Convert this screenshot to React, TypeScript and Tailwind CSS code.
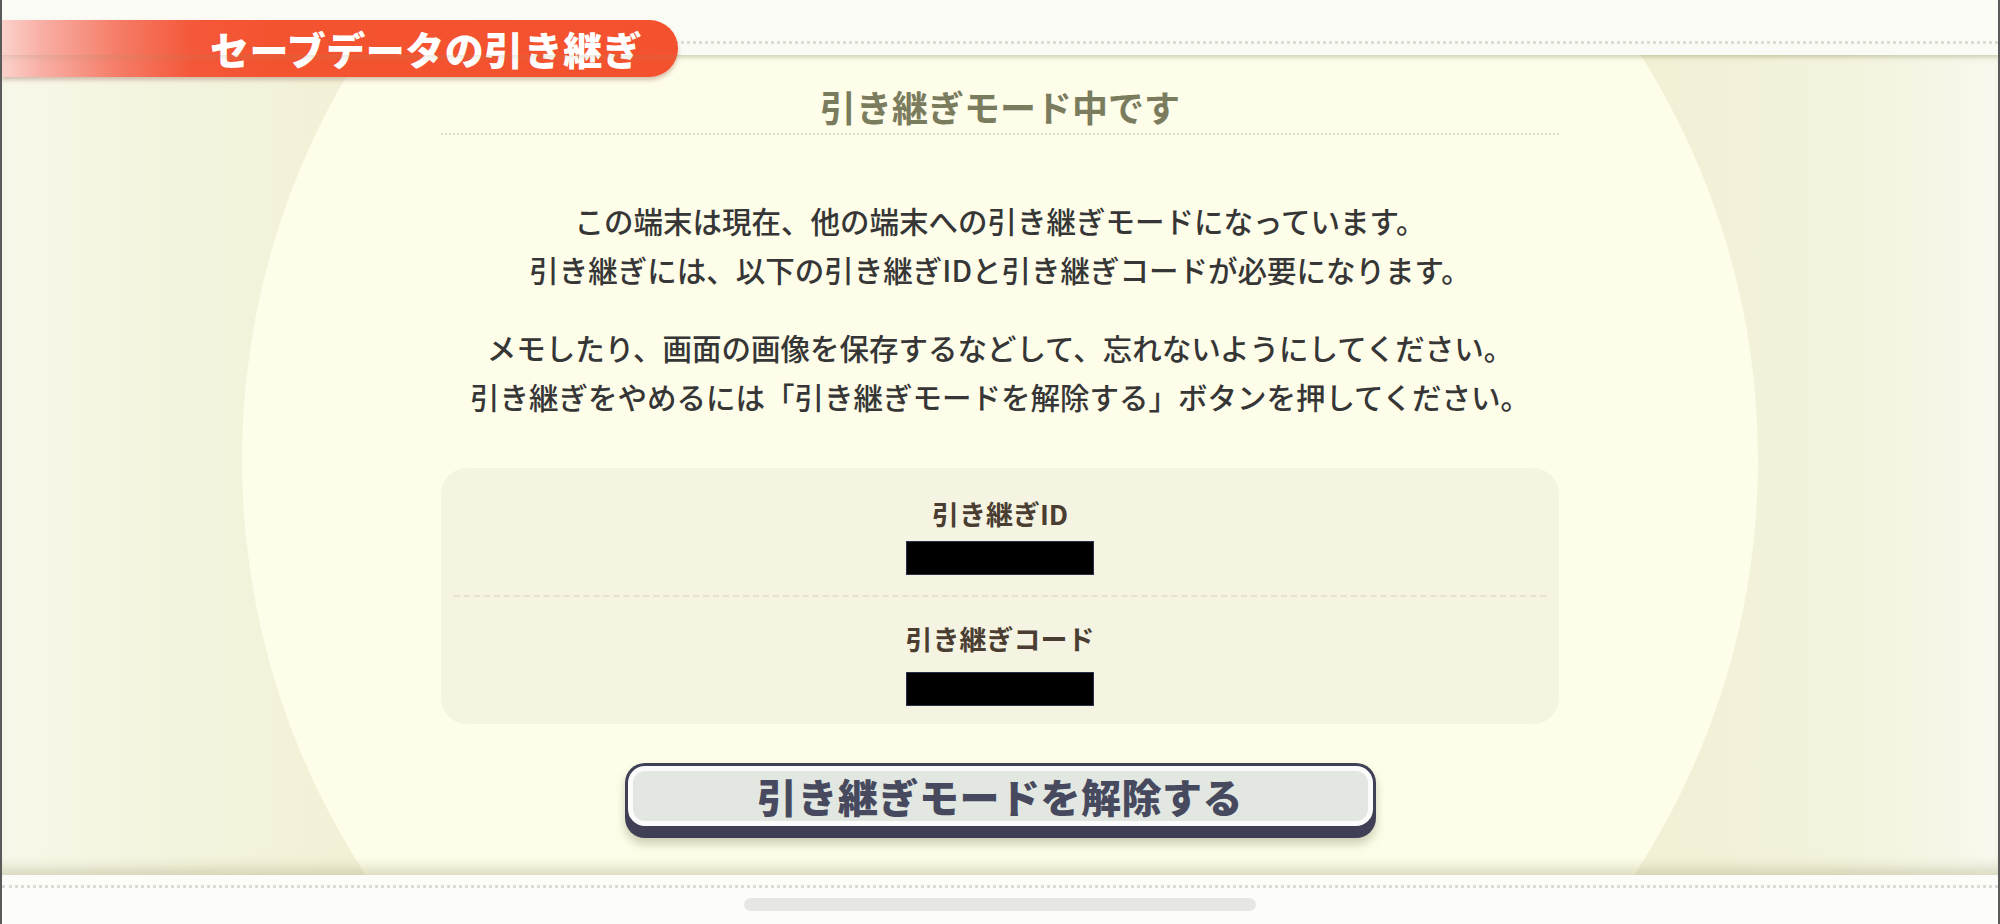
export default function App() {
  return (
    <div className="w-[2000px] h-[924px] flex flex-col overflow-hidden border-x-2 border-[#5a5a5a] font-['Noto_Sans_CJK_JP','Noto_Sans',sans-serif]">
      <Header />
      <Main />
      <Footer />
    </div>
  );
}

function Header() {
  return (
    <header className="relative z-20 h-[55px] shrink-0 bg-[#fbfbf5] pt-[41px] shadow-[0_2px_3px_rgba(150,150,110,0.25)]">
      <div className="border-t-[3px] border-dotted border-[#dcdcd2]" />
      <div className="absolute left-0 top-[20px] flex h-[57px] w-[676px] items-center rounded-r-full bg-[linear-gradient(90deg,#fbd2cc_0%,#f8aea4_6%,#f57d67_17%,#f4583a_28%,#f4532f_40%,#f4522e_100%)] pl-[208px] shadow-[0_3px_4px_rgba(120,60,40,0.3)]">
        <span className="text-[39px] font-black leading-none tracking-[0.5px] text-white">セーブデータの引き継ぎ</span>
      </div>
    </header>
  );
}

function Main() {
  return (
    <main className="relative flex-1 overflow-hidden bg-[linear-gradient(90deg,#f8f8ea_0%,#f4f3de_8%,#f1f0d3_22%,#f1f0d3_78%,#f3f2dc_92%,#f8f8ed_100%)]">
      {/* big light disc behind the panel */}
      <div className="absolute left-[240px] top-[-353px] h-[1516px] w-[1516px] rounded-full bg-[#fdfde9]" />

      <div className="relative z-10 mx-auto flex w-[1118px] flex-col items-center pt-[27px]">
        <h2 className="h-[48px] text-[36px] font-bold leading-[48px] text-[#7b7b5d]">引き継ぎモード中です</h2>
        <div className="mt-[3px] w-full border-t-2 border-dotted border-[#dedcca]" />

        <div className="mt-[61px] text-center text-[29.5px] font-medium leading-[49px] text-[#363636]">
          <p>この端末は現在、他の端末への引き継ぎモードになっています。</p>
          <p>引き継ぎには、以下の引き継ぎIDと引き継ぎコードが必要になります。</p>
        </div>
        <div className="mt-[29px] text-center text-[29.5px] font-medium leading-[49px] text-[#363636]">
          <p>メモしたり、画面の画像を保存するなどして、忘れないようにしてください。</p>
          <p>引き継ぎをやめるには「引き継ぎモードを解除する」ボタンを押してください。</p>
        </div>

        <div className="mt-[47px] flex w-full flex-col items-center rounded-[26px] bg-[#f5f3e1] pb-[18px] pt-[29px]">
          <div className="h-[34px] text-[27px] font-bold leading-[34px] text-[#4a3d31]">引き継ぎID</div>
          <div className="mt-[10px] h-[34px] w-[188px] border border-[#27304a] bg-black" />
          <div className="mt-[20px] w-[1092px] border-t-2 border-dashed border-[#e5e3cc]" />
          <div className="mt-[25px] h-[34px] text-[27px] font-bold leading-[34px] text-[#4a3d31]">引き継ぎコード</div>
          <div className="mt-[16px] h-[34px] w-[188px] border border-[#27304a] bg-black" />
        </div>

        <button className="mt-[39px] h-[75px] w-[751px] rounded-[20px] bg-[#3f4056] p-[3px] pb-[12px] shadow-[0_6px_10px_rgba(120,120,80,0.35)]">
          <div className="flex h-full w-full items-center justify-center rounded-[17px] border-[5px] border-[#fbfbfb] bg-[#e2e7e1]">
            <span className="text-[40px] font-black leading-none tracking-[0.5px] text-[#474a5e]">引き継ぎモードを解除する</span>
          </div>
        </button>
      </div>

      {/* soft edge shading top and bottom */}
      <div className="pointer-events-none absolute inset-0 z-20 shadow-[inset_0_-16px_14px_-10px_rgba(150,150,100,0.35),inset_0_6px_6px_-4px_rgba(150,150,100,0.25)]" />
    </main>
  );
}

function Footer() {
  return (
    <footer className="h-[49px] shrink-0 bg-[#fcfcf8] pt-[10px]">
      <div className="border-t-[3px] border-dotted border-[#dcdcd4]" />
      <div className="mx-auto mt-[10px] h-[13px] w-[512px] rounded-full bg-[#e6e6e3]" />
    </footer>
  );
}
